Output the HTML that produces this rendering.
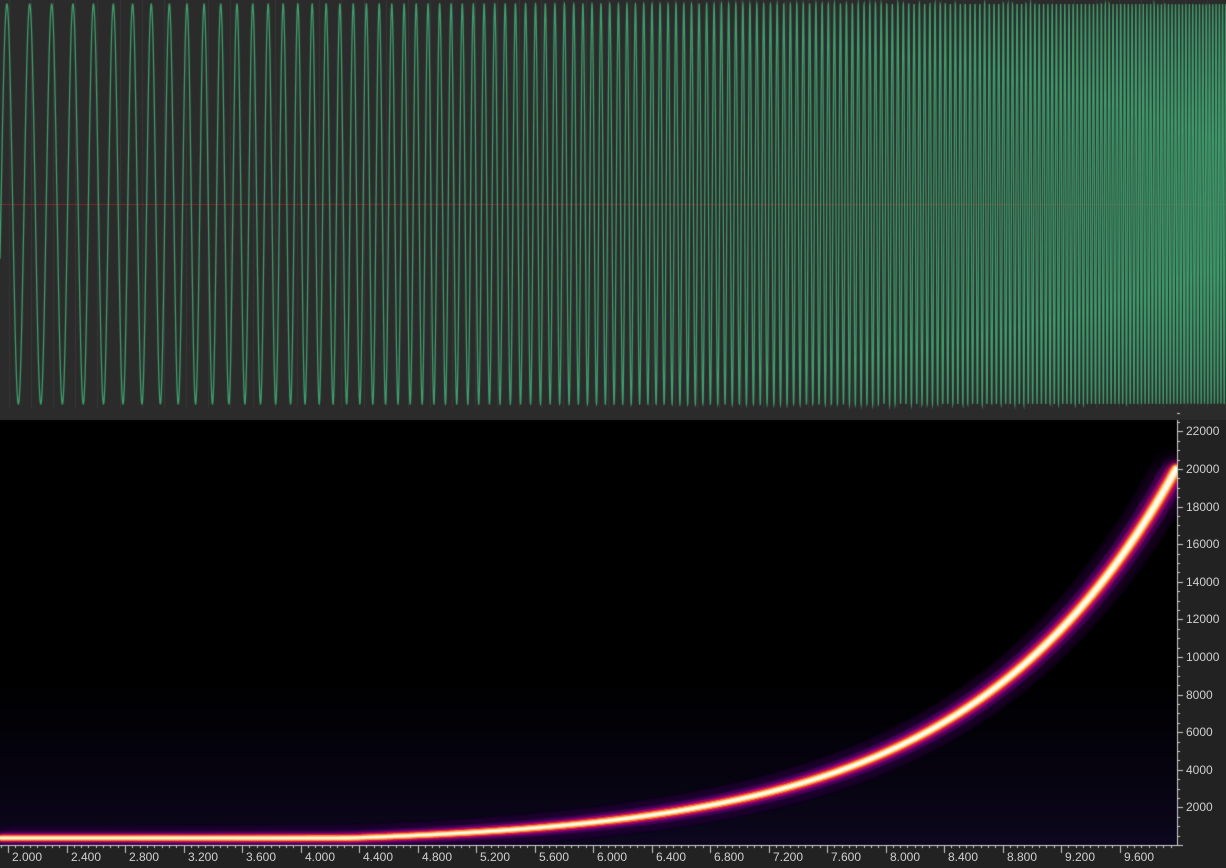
<!DOCTYPE html>
<html><head><meta charset="utf-8">
<style>
html,body{margin:0;padding:0;background:#222;width:1226px;height:868px;overflow:hidden;font-family:"Liberation Sans",sans-serif}
#c{position:absolute;left:0;top:0}
.yl{position:absolute;left:1186px;color:#d0d0d0;font-size:12px;line-height:14px}
.xl{position:absolute;top:850px;color:#d0d0d0;font-size:12px;line-height:14px}
</style></head><body>
<canvas id="c" width="1226" height="868"></canvas>
<div id="labels">
<div class="yl" style="top:424px">22000</div>
<div class="yl" style="top:462px">20000</div>
<div class="yl" style="top:500px">18000</div>
<div class="yl" style="top:537px">16000</div>
<div class="yl" style="top:575px">14000</div>
<div class="yl" style="top:612px">12000</div>
<div class="yl" style="top:650px">10000</div>
<div class="yl" style="top:688px">8000</div>
<div class="yl" style="top:725px">6000</div>
<div class="yl" style="top:763px">4000</div>
<div class="yl" style="top:800px">2000</div>
<div class="xl" style="left:12px">2.000</div>
<div class="xl" style="left:71px">2.400</div>
<div class="xl" style="left:129px">2.800</div>
<div class="xl" style="left:188px">3.200</div>
<div class="xl" style="left:246px">3.600</div>
<div class="xl" style="left:305px">4.000</div>
<div class="xl" style="left:363px">4.400</div>
<div class="xl" style="left:422px">4.800</div>
<div class="xl" style="left:480px">5.200</div>
<div class="xl" style="left:539px">5.600</div>
<div class="xl" style="left:597px">6.000</div>
<div class="xl" style="left:656px">6.400</div>
<div class="xl" style="left:714px">6.800</div>
<div class="xl" style="left:773px">7.200</div>
<div class="xl" style="left:831px">7.600</div>
<div class="xl" style="left:890px">8.000</div>
<div class="xl" style="left:948px">8.400</div>
<div class="xl" style="left:1007px">8.800</div>
<div class="xl" style="left:1065px">9.200</div>
<div class="xl" style="left:1124px">9.600</div>
</div>
<script>
const c=document.getElementById('c'),g=c.getContext('2d');
g.fillStyle='#2b2b2b';g.fillRect(0,0,1226,420);
g.strokeStyle='#363636';g.lineWidth=1;
for(let x=8.5;x<1226;x+=22.2){g.beginPath();g.moveTo(Math.round(x)+.5,0);g.lineTo(Math.round(x)+.5,408);g.stroke();}
g.strokeStyle='rgba(160,40,40,0.7)';g.beginPath();g.moveTo(0,204.5);g.lineTo(1226,204.5);g.stroke();
g.strokeStyle='#3f9f6e';g.lineWidth=1.3;g.beginPath();
const k=Math.log(7.3)/1226,f0=1/23.5;let ph=-Math.PI/2-0.3;
for(let i=0;i<=1226*12;i++){const x=i/12;const f=f0*Math.exp(k*x);ph+=2*Math.PI*f/12;
const y=204-200*Math.cos(ph);if(i==0)g.moveTo(x,y);else g.lineTo(x,y);}
g.stroke();
// spectrogram
g.fillStyle='#000';g.fillRect(0,420,1177,425);
let hz=g.createLinearGradient(0,680,0,845);hz.addColorStop(0,'rgba(20,10,50,0)');hz.addColorStop(1,'rgba(25,15,60,0.5)');
g.fillStyle=hz;g.fillRect(0,680,1177,165);
function yf(f){return 845-f*(37.6/2000);}
const fa=69,ka=0.00482;
const pts=[];for(let x=0;x<=1177;x+=2){pts.push([x,yf(Math.max(fa*Math.exp(ka*x),370))]);}
function curve(w0,w1,col,blur){g.strokeStyle=col;g.shadowColor=col;g.shadowBlur=blur;g.lineCap='round';
for(let i=1;i<pts.length;i++){const t=pts[i][0]/1177;g.lineWidth=w0+(w1-w0)*t*t;g.beginPath();g.moveTo(pts[i-1][0],pts[i-1][1]);g.lineTo(pts[i][0],pts[i][1]);g.stroke();}
g.shadowBlur=0;}
g.save();g.beginPath();g.rect(0,420,1177,425);g.clip();
curve(26,50,'rgba(60,0,80,0.05)',0);
curve(14,30,'rgba(110,0,120,0.12)',0);
curve(10,20,'rgba(180,10,110,0.25)',0);
curve(7,14,'rgba(230,40,60,0.5)',0);
curve(5,10,'#ff8a3a',0);
curve(3,7,'#ffd88a',0);
curve(1.5,4.5,'#fffbe6',0);
g.restore();
g.fillStyle='#222';g.fillRect(1177,420,49,448);g.fillRect(0,845,1226,23);
g.strokeStyle='#cfcfcf';g.lineWidth=1;
g.beginPath();g.moveTo(1177.5,420);g.lineTo(1177.5,845.5);g.lineTo(0,845.5);g.stroke();
for(let i=0;i<=46;i++){const y=Math.round(845-i*9.4)+.5;const L=(i%4==0)?6:3;g.beginPath();g.moveTo(1177,y);g.lineTo(1177+L,y);g.stroke();}
for(let i=-2;i<=170;i++){const x=Math.round(8+i*58.5/8)+.5;if(x>1177)break;const L=(i%8==0)?8:3;g.beginPath();g.moveTo(x,845);g.lineTo(x,845+L);g.stroke();}
</script>
</body></html>
